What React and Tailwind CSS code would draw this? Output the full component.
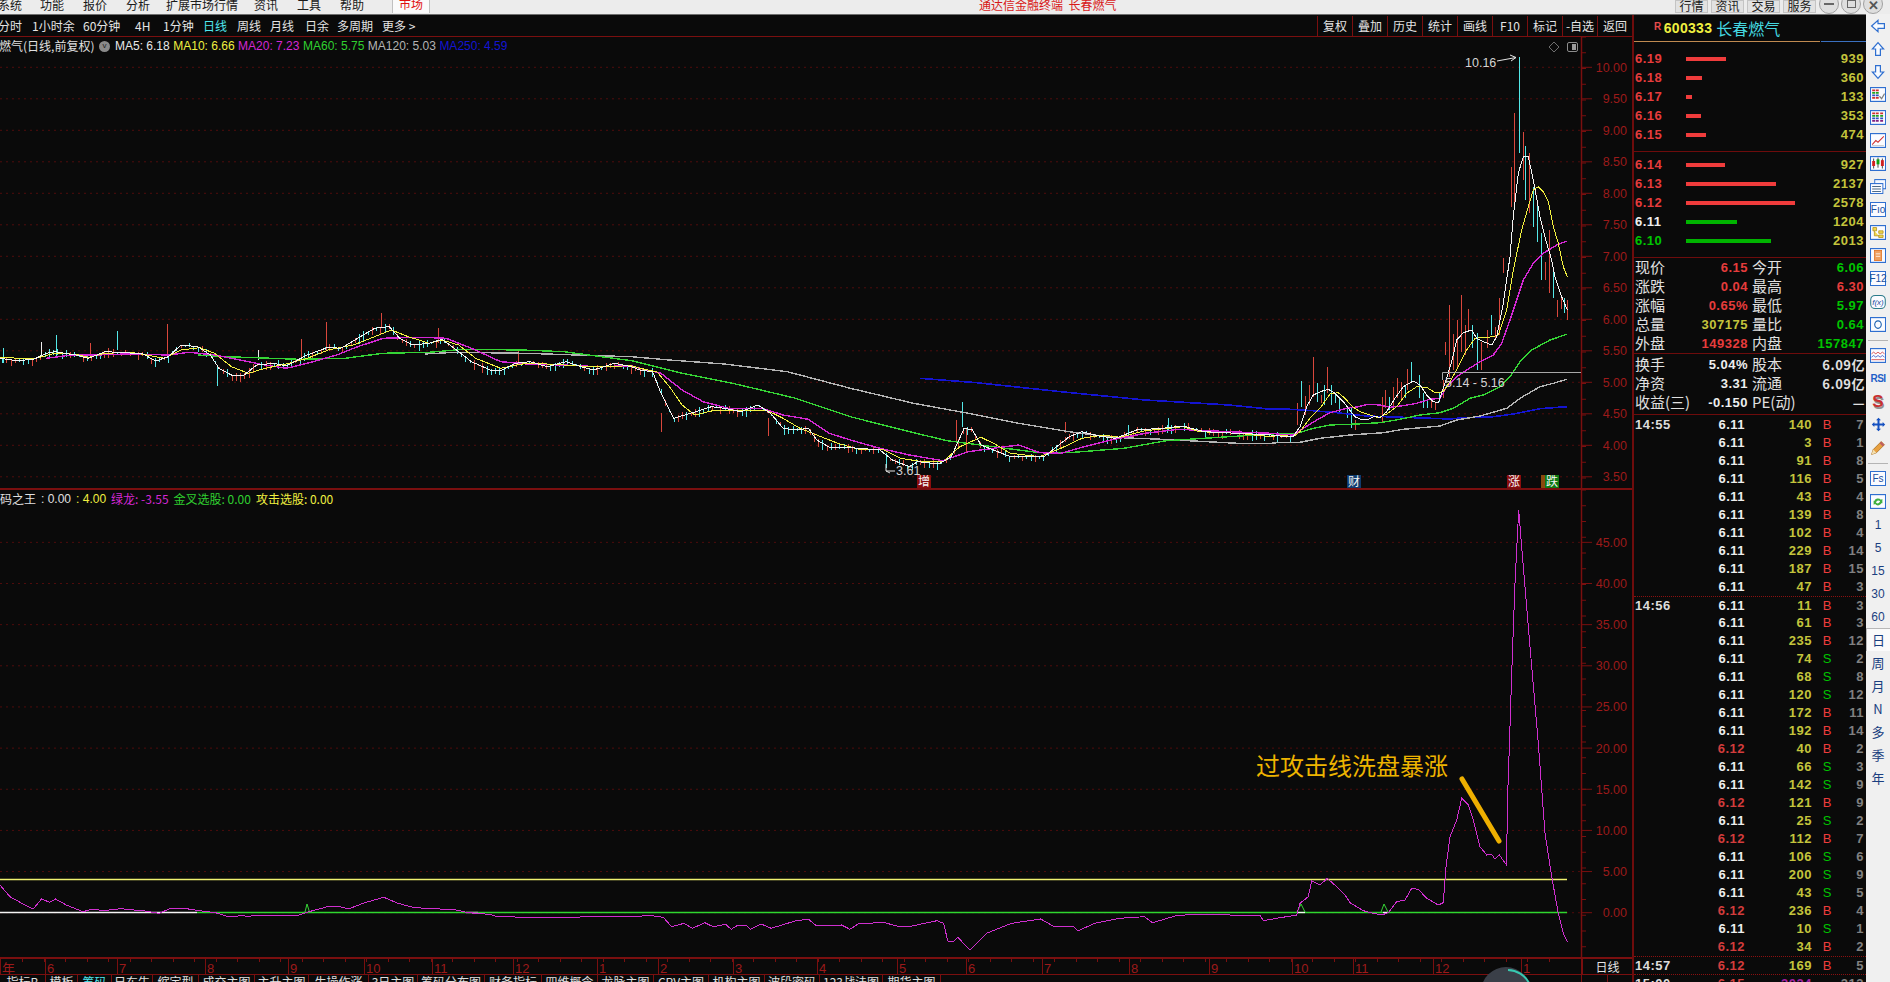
import React from 'react'

const CJK = 'font-["Noto_Sans_CJK_SC","Liberation_Sans",sans-serif]'
const NUM = 'font-["Liberation_Sans","Noto_Sans_CJK_SC",sans-serif]'

// each zoomed crop has its own scale, points below were read off those crops
const fit = (ox, oy, sx, sy) => pts => pts.map(([x, y]) => [ox + x / sx, oy + y / sy])
const left = fit(0, 300, 2.376, 3)
const mid = fit(640, 360, 2.376, 3)
const right = fit(1280, 40, 3, 3)
const join = (a, b, c) => [
  ...left(a).filter(p => p[0] < 640),
  ...mid(b).filter(p => p[0] >= 640 && p[0] < 1280),
  ...right(c),
]

const MA5 = join(
  [[0,175],[40,182],[80,178],[110,160],[130,155],[180,165],[210,175],[250,155],[300,158],[340,162],[370,183],[400,170],[430,135],[470,140],[500,165],[520,205],[550,225],[580,225],[610,195],[650,190],[680,198],[730,165],[780,142],[810,145],[850,115],[890,85],[925,80],[950,115],[980,135],[1020,130],[1050,118],[1085,150],[1120,185],[1165,210],[1190,212],[1225,190],[1260,185],[1300,200],[1345,185],[1380,200],[1410,210],[1460,190],[1500,200]],
  [[0,30],[30,35],[50,100],[80,175],[120,160],[170,140],[200,145],[240,155],[280,135],[310,160],[340,205],[370,210],[400,205],[420,240],[450,262],[490,262],[570,270],[600,300],[640,320],[660,305],[710,312],[740,290],[770,205],[790,210],[810,255],[850,275],[880,290],[960,290],[990,260],[1020,230],[1050,215],[1090,228],[1130,235],[1180,210],[1240,205],[1290,198],[1340,215],[1420,220],[1500,225]],
  [[0,1188],[40,1190],[60,1160],[80,1100],[100,1065],[130,1052],[145,1048],[165,1060],[190,1085],[205,1105],[225,1130],[245,1140],[265,1138],[285,1128],[300,1133],[320,1115],[345,1075],[370,1040],[400,1023],[420,1035],[440,1065],[460,1085],[475,1088],[495,1030],[515,965],[530,900],[550,878],[575,870],[590,895],[610,905],[635,915],[650,890],[670,790],[690,650],[700,530],[715,400],[730,350],[745,350],[760,420],[780,530],[800,610],[815,660],[825,710],[845,770],[862,810]],
)
const MA10 = join(
  [[0,172],[80,177],[130,160],[180,163],[210,172],[250,160],[310,157],[340,163],[390,175],[430,150],[475,143],[510,160],[550,200],[590,220],[630,205],[680,192],[730,175],[780,150],[840,135],[900,105],[930,90],[970,110],[1020,130],[1050,120],[1090,135],[1130,175],[1190,205],[1250,190],[1300,192],[1380,198],[1430,200],[1500,197]],
  [[0,25],[40,35],[70,80],[100,135],[130,165],[180,150],[240,152],[300,150],[340,175],[380,205],[420,225],[470,250],[520,268],[580,270],[620,295],[670,305],[720,305],[760,260],[810,232],[840,250],[880,280],[950,290],[1000,265],[1050,235],[1100,225],[1140,232],[1200,212],[1290,200],[1330,215],[1420,220],[1500,230]],
  [[0,1185],[40,1190],[60,1175],[90,1135],[120,1105],[150,1062],[175,1058],[195,1075],[215,1098],[240,1115],[270,1125],[295,1133],[320,1122],[350,1100],[380,1060],[410,1040],[440,1042],[465,1058],[490,1055],[510,1025],[535,980],[560,930],[585,895],[605,893],[640,890],[655,885],[680,810],[700,690],[725,570],[745,500],[760,450],[775,440],[790,455],[805,485],[820,560],[835,610],[850,680],[862,710]],
)
const MA20 = join(
  [[110,175],[170,165],[230,165],[300,162],[400,165],[450,157],[510,165],[570,180],[620,193],[680,205],[730,190],[800,165],[850,140],[910,115],[1000,112],[1060,115],[1120,145],[1190,185],[1260,193],[1340,195],[1420,200],[1500,197]],
  [[0,25],[50,40],[100,90],[150,125],[210,145],[290,145],[340,165],[400,178],[450,220],[500,240],[570,265],[640,285],[720,302],[780,275],[850,263],[900,255],[950,278],[1000,280],[1050,262],[1120,240],[1200,220],[1280,208],[1400,215],[1500,220]],
  [[0,1183],[40,1185],[70,1165],[110,1140],[150,1118],[200,1105],[235,1100],[265,1093],[300,1095],[330,1102],[370,1097],[410,1090],[450,1078],[480,1075],[500,1040],[530,1010],[560,990],[600,965],[640,945],[665,910],[690,840],[710,780],[730,720],[760,670],[790,640],[830,615],[860,603]],
)
const MA60 = join(
  [[470,165],[540,170],[710,178],[820,175],[910,160],[1020,157],[1100,148],[1240,150],[1340,155],[1500,182]],
  [[0,8],[100,40],[220,70],[370,115],[500,170],[640,215],[730,242],[850,262],[950,278],[1020,278],[1150,265],[1250,242],[1340,235],[1500,222]],
  [[0,1180],[50,1180],[100,1165],[150,1155],[230,1152],[300,1148],[360,1138],[420,1125],[480,1118],[520,1105],[570,1075],[610,1065],[660,1040],[690,1010],[720,965],[755,930],[810,900],[860,883]],
)
const MA120 = join(
  [[1010,162],[1080,157],[1250,160],[1370,165],[1500,170]],
  [[70,0],[200,12],[350,35],[500,85],[650,130],[780,160],[900,190],[1020,215],[1120,232],[1240,238],[1420,250],[1500,250]],
  [[0,1207],[60,1207],[120,1195],[210,1185],[310,1178],[370,1168],[480,1158],[530,1140],[600,1128],[680,1105],[720,1075],[780,1040],[820,1030],[860,1018]],
)
const MA250 = join(
  [],
  [[665,55],[800,68],[1000,95],[1200,120],[1400,135],[1500,148]],
  [[0,1106],[100,1112],[170,1118],[260,1128],[400,1133],[510,1137],[550,1133],[640,1130],[700,1122],[780,1106],[860,1100]],
)

const R = '#d9473c'
const C = '#54e8e8'

const handCandles = [
  ...[[52,1090,1155,R],[64,1022,1100,C],[76,1068,1125,R],[86,1035,1095,R],[98,952,1070,R],[110,1030,1085,C],[122,1065,1090,R],[132,1035,1095,C],[142,982,1060,R],[154,1035,1095,C],[166,1060,1090,C],[178,1070,1115,C],[200,1105,1135,C],[212,1105,1165,C],[224,1140,1170,R],[305,1070,1145,R],[314,1050,1105,R],[326,1070,1110,C],[338,1040,1105,R],[350,1015,1075,R],[362,1025,1080,R],[374,1035,1075,C],[382,988,1050,R],[394,965,1030,C],[418,1005,1075,C],[430,1060,1105,C],[440,1080,1105,C],[452,1075,1105,R],[464,1085,1110,R],[476,1060,1085,C],[488,1020,1075,R],[496,905,945,R],[508,795,1010,R],[520,882,990,R],[532,840,985,R],[544,765,935,R],[554,855,945,R],[565,808,875,R],[576,855,925,C],[590,880,990,C],[602,905,990,R],[622,870,925,R],[634,825,885,C],[646,860,895,R],[658,775,885,R],[668,655,698,R],[692,380,500,R],[703,220,500,R],[716,50,340,C],[728,275,420,R],[736,318,480,C],[748,340,520,R],[760,440,560,C],[772,480,605,C],[784,580,720,C],[794,665,720,R],[806,570,760,R],[818,680,775,C],[830,780,830,R],[842,775,808,R],[852,775,818,C],[862,780,840,R]]
    .map(([x, a, b, c]) => [1280 + x / 3, 40 + a / 3, 40 + b / 3, c]),
  ...[[8,145,190,C],[98,125,170,'#eeeeee'],[134,105,170,C],[215,130,175,R],[279,93,150,C],[397,72,165,R],[515,195,258,C],[714,118,170,R],[775,67,150,R],[905,40,85,R],[613,150,180,'#eeeeee'],[1230,150,190,R],[1040,85,130,R]]
    .map(([x, a, b, c]) => [x / 2.376, 300 + a / 3, 300 + b / 3, c]),
  ...[[50,160,215,R],[305,175,228,R],[765,127,200,C],[750,180,250,R],[775,205,280,R],[1010,185,220,R],[1160,195,225,C],[1255,175,210,C],[1562,135,195,R],[585,280,325,C]]
    .map(([x, a, b, c]) => [640 + x / 2.376, 360 + a / 3, 360 + b / 3, c]),
]

function yAt(line, x) {
  for (let i = 1; i < line.length; i++) {
    if (x <= line[i][0]) {
      const [x0, y0] = line[i - 1]
      const [x1, y1] = line[i]
      return y0 + ((y1 - y0) * (x - x0)) / (x1 - x0 || 1)
    }
  }
  return line[line.length - 1][1]
}

// small bars that follow the white line, same seed every render
function makeCandles() {
  const out = []
  let seed = 7
  const rnd = () => {
    seed = (seed * 9301 + 49297) % 233280
    return seed / 233280
  }
  for (let x = 2; x < 1290; x += 4.25) {
    const base = yAt(MA5, x)
    const up = rnd() * 4
    const down = 1 + rnd() * 6
    const col = rnd() > 0.5 ? R : C
    out.push([x, base - up, base + down, col])
  }
  return out
}

const CANDLES = [...makeCandles(), ...handCandles]
const pathFor = col =>
  CANDLES.filter(c => c[3] === col)
    .map(c => `M${Math.round(c[0]) + 0.5} ${c[1].toFixed(1)}V${c[2].toFixed(1)}`)
    .join('')

const OSC = [
  ...fit(0, 860, 1.206, 3)([[0,75],[12,110],[30,135],[40,147],[50,117],[60,127],[67,117],[80,135],[100,155],[112,147],[125,152],[145,146],[175,153],[192,160],[205,146],[225,146],[240,152],[260,158],[275,170],[285,170],[290,166],[300,170],[305,166],[360,166],[370,157],[395,140],[410,140],[420,147],[440,128],[463,112],[480,130],[500,143],[530,147],[550,150],[565,158],[590,163],[600,170],[640,172],[700,171],[770,170],[780,165],[800,172],[810,200],[825,190],[835,205],[850,188],[860,200],[875,193],[882,208],[890,195],[900,195],[905,208],[918,192],[930,205],[960,182],[975,178],[985,198],[1015,195],[1025,208],[1035,192],[1065,187],[1085,200],[1100,198],[1130,182],[1138,190],[1143,243],[1150,245],[1155,232],[1170,270],[1190,220],[1220,190],[1255,177],[1270,198],[1295,200],[1300,213],[1320,190],[1350,175],[1380,170],[1390,188],[1420,166],[1450,163]]),
  ...fit(1230, 500, 3, 3)([[0,1245],[90,1245],[100,1262],[140,1255],[200,1245],[210,1210],[235,1190],[245,1142],[270,1155],[292,1135],[320,1160],[345,1185],[360,1208],[400,1232],[430,1240],[455,1245],[475,1238],[500,1205],[525,1200],[545,1165],[565,1168],[590,1195],[625,1215],[640,1208],[648,1100],[660,1010],[680,960],[695,895],[715,915],[730,960],[750,1040],[770,1065],[785,1063],[795,1078],[808,1065],[830,1095],[832,920],[840,680],[845,520],[855,250],[866,30],[880,200],[900,440],[925,730],[945,1000],[965,1130],[985,1240],[1000,1300],[1012,1325]]),
]

const poly = pts => pts.map(p => `${p[0].toFixed(1)},${p[1].toFixed(1)}`).join(' ')

const AXIS_RED = '#9c1a1a'
const LINE_RED = '#7a0f0f'
const GRID_RED = '#4f0c0c'

const priceY = v => 67.3 + (10 - v) * 63
const oscY = v => 912.7 - v * 8.23
const PRICES = [10, 9.5, 9, 8.5, 8, 7.5, 7, 6.5, 6, 5.5, 5, 4.5, 4, 3.5]
const OSC_VALS = [45, 40, 35, 30, 25, 20, 15, 10, 5, 0]

const svgFont = { fontFamily: '"Liberation Sans","Noto Sans CJK SC",sans-serif' }

function Axis({ values, toY, top, bottom }) {
  const ticks = []
  for (let y = top; y < bottom; y += 15.75) ticks.push(y)
  return (
    <g style={svgFont}>
      {values.map(v => (
        <g key={v}>
          <line x1="0" x2="1581" y1={toY(v)} y2={toY(v)} stroke={GRID_RED} strokeDasharray="2 4" />
          <line x1="1581" x2="1592" y1={toY(v)} y2={toY(v)} stroke={LINE_RED} />
          <text x="1627" y={toY(v) + 4.5} textAnchor="end" fontSize="12.5" fill={AXIS_RED}>
            {v.toFixed(2)}
          </text>
        </g>
      ))}
      {ticks.map(y => (
        <line key={y} x1="1581" x2="1586" y1={y} y2={y} stroke={LINE_RED} />
      ))}
      <line x1="1581.5" x2="1581.5" y1={top} y2={bottom} stroke={LINE_RED} strokeWidth="1.5" />
    </g>
  )
}

function Badge({ x, w = 14, fill, children, y = 475 }) {
  return (
    <g>
      <rect x={x} y={y} width={w} height={13} fill={fill} />
      <text x={x + w / 2} y={y + 11} textAnchor="middle" fontSize="12" fill="#f4f4f4">{children}</text>
    </g>
  )
}

function MaLine({ pts, color, width = 1 }) {
  return <polyline points={poly(pts)} fill="none" stroke={color} strokeWidth={width} shapeRendering="crispEdges" />
}

function PriceChart() {
  return (
    <svg viewBox="0 37 1632 451" width="1632" height="451" className="block">
      <Axis values={PRICES} toY={priceY} top={37} bottom={488} />
      <path d={pathFor(R)} stroke={R} fill="none" shapeRendering="crispEdges" />
      <path d={pathFor(C)} stroke={C} fill="none" shapeRendering="crispEdges" />
      <path d={pathFor('#eeeeee')} stroke="#eeeeee" fill="none" shapeRendering="crispEdges" />
      <MaLine pts={MA250} color="#1414d2" width={1.6} />
      <MaLine pts={MA120} color="#b4b4b4" width={1.4} />
      <MaLine pts={MA60} color="#35d435" width={1.4} />
      <MaLine pts={MA20} color="#d428d4" width={1.4} />
      <MaLine pts={MA10} color="#f2f240" />
      <MaLine pts={MA5} color="#f4f4f4" />

      {/* 5.14 - 5.16 range marker */}
      <path d="M1442.5 380V372.5H1581" stroke="#a8a8a8" fill="none" />
      <g style={svgFont} fill="#d4d4d4" fontSize="12.5">
        <text x="1445" y="387">5.14 - 5.16</text>
        <text x="1465" y="67">10.16</text>
        <text x="896" y="475">3.61</text>
      </g>
      <path d="M1497 61L1516 57.5M1510 55L1516 57.5L1511 61" stroke="#e4e4e4" fill="none" />
      <path d="M895 471H886V464M886 471L890 473" stroke="#e4e4e4" fill="none" />

      <g style={{ fontFamily: '"Noto Sans CJK SC",sans-serif' }}>
        <Badge x={917} fill="#8a0d0d">增</Badge>
        <Badge x={1347} fill="#0f3b6e">财</Badge>
        <Badge x={1507} fill="#8a0d0d">涨</Badge>
        <Badge x={1541} w={8} fill="#8a4a0d">
          {''}
        </Badge>
        <Badge x={1545} fill="#0d7a12">跌</Badge>
      </g>

      {/* diamond and pane toggle */}
      <path d="M1554 42L1559 47L1554 52L1549 47Z" stroke="#6e6e6e" fill="none" />
      <rect x="1567.5" y="42.5" width="10" height="9" rx="1.5" stroke="#8c8c8c" fill="none" />
      <rect x="1572" y="44" width="4" height="6" fill="#9a9a9a" />
    </svg>
  )
}

function OscChart() {
  return (
    <svg viewBox="0 490 1632 467" width="1632" height="467" className="block">
      <Axis values={OSC_VALS} toY={oscY} top={490} bottom={957} />
      <line x1="0" x2="1567" y1="879.5" y2="879.5" stroke="#f0f070" strokeWidth="1.3" />
      <line x1="197" x2="1567" y1="912.5" y2="912.5" stroke="#2fd62f" strokeWidth="1.3" />
      <line x1="0" x2="197" y1="912.5" y2="912.5" stroke="#f4f4f4" strokeWidth="1.3" />
      <line x1="466" x2="478" y1="912.5" y2="912.5" stroke="#9a9a9a" strokeWidth="1.6" />
      <line x1="1297" x2="1305" y1="912.5" y2="912.5" stroke="#f4f4f4" strokeWidth="1.3" />
      <line x1="1383" x2="1388" y1="912.5" y2="912.5" stroke="#f4f4f4" strokeWidth="1.3" />
      <path d="M305 912L307 904L309.5 912M1297 912L1301 904L1305 912M1381 912L1384 904L1388 912" stroke="#36d436" fill="none" />
      <polyline points={poly(OSC)} fill="none" stroke="#cf2fcf" strokeWidth="1" shapeRendering="crispEdges" />
      <line x1="1462" y1="779" x2="1499" y2="841" stroke="#eeb000" strokeWidth="5" strokeLinecap="round" />
      <text
        x="1256"
        y="775"
        fontSize="24"
        fill="#eeb400"
        style={{ fontFamily: '"Noto Sans CJK SC",sans-serif' }}
      >
        过攻击线洗盘暴涨
      </text>
    </svg>
  )
}

const MONTHS = [
  [0, '年'], [45, '6'], [117, '7'], [205, '8'], [288, '9'], [364, '10'], [432, '11'], [513, '12'], [597, '1'],
  [658, '2'], [733, '3'], [817, '4'], [897, '5'], [966, '6'], [1042, '7'], [1129, '8'], [1209, '9'], [1292, '10'],
  [1353, '11'], [1433, '12'], [1521, '1'],
]

function DateAxis() {
  const minor = []
  for (let x = 22; x < 1570; x += 21.5) minor.push(x)
  return (
    <svg viewBox="0 959 1581 15" width="1581" height="15" className="block shrink-0">
      {minor.map(x => (
        <line key={x} x1={Math.round(x) + 0.5} x2={Math.round(x) + 0.5} y1="959" y2="962" stroke={LINE_RED} />
      ))}
      {MONTHS.map(([x, label]) => (
        <g key={x}>
          <line x1={x + 0.5} x2={x + 0.5} y1="959" y2="974" stroke={LINE_RED} />
          <text x={x + 2} y="972.5" fontSize="13" fill={AXIS_RED} style={svgFont}>{label}</text>
        </g>
      ))}
    </svg>
  )
}

const TOP_MENU = [
  ['系统', 'w-[42px] -ml-[2px]'],
  ['功能', 'w-[43px]'],
  ['报价', 'w-[43px]'],
  ['分析', 'w-[40px]'],
  ['扩展市场行情', 'w-[88px]'],
  ['资讯', 'w-[43px]'],
  ['工具', 'w-[43px]'],
  ['帮助', 'w-[49px]'],
]

const LEFT_TOOLS = [
  ['分时', 'w-[34px] -ml-[2px]'],
  ['1小时余', 'w-[51px]'],
  ['60分钟', 'w-[52px]'],
  ['4H', 'w-[28px]'],
  ['1分钟', 'w-[40px]'],
  ['日线', 'w-[34px] text-[#4fe8f0]'],
  ['周线', 'w-[33px]'],
  ['月线', 'w-[35px]'],
  ['日余', 'w-[32px]'],
  ['多周期', 'w-[45px]'],
  ['更多 >', 'w-[40px]'],
]

const RIGHT_TOOLS = ['复权', '叠加', '历史', '统计', '画线', 'F10', '标记', '-自选', '返回']

const LEGEND = [
  ['MA5: 6.18', 'text-[#e8e8e8]'],
  ['MA10: 6.66', 'text-[#f0f040]'],
  ['MA20: 7.23', 'text-[#d428d4]'],
  ['MA60: 5.75', 'text-[#30d030]'],
  ['MA120: 5.03', 'text-[#b4b4b4]'],
  ['MA250: 4.59', 'text-[#1414d2]'],
]

const TABS = [
  ['指标B', 'w-[46px]'], ['模板', 'w-[32px]'], ['筹码', 'w-[34px] text-[#4fe8f0]'], ['日东牛', 'w-[41px]'],
  ['缩定型', 'w-[46px]'], ['成交主图', 'w-[56px]'], ['主升主图', 'w-[54px]'], ['生操作涨', 'w-[60px]'],
  ['3日主图', 'w-[49px]'], ['筹码分布图', 'w-[67px]'], ['财务指标', 'w-[57px]'], ['四维概念', 'w-[56px]'],
  ['龙脉主图', 'w-[56px]'], ['CPV主图', 'w-[55px]'], ['机构主图', 'w-[56px]'], ['波段密码', 'w-[55px]'],
  ['123战法图', 'w-[63px]'], ['期货主图', 'w-[58px]'],
]

function TopBar() {
  return (
    <div className={`flex h-[15px] shrink-0 items-start overflow-hidden border-b border-[#6e6e6e] bg-[#ececec] text-[12px] leading-[9px] text-[#1a1a1a] ${CJK}`}>
      {TOP_MENU.map(([label, cls]) => (
        <span key={label} className={`shrink-0 ${cls}`}>{label}</span>
      ))}
      <span className="-mt-px ml-[3px] flex h-[14px] w-[38px] shrink-0 justify-center border-x border-[#c0c0c0] bg-[#fafafa] text-[#e01010]">市场</span>
      <span className="ml-[549px] w-[139px] shrink-0 text-[#d81818]">通达信金融终端&nbsp;&nbsp;长春燃气</span>
      <div className="ml-[557px] flex shrink-0 gap-[3px]">
        {['行情', '资讯', '交易', '服务'].map(label => (
          <span key={label} className="flex h-[13px] w-[33px] justify-center border border-[#c4c4c4] bg-[#e2e2e2]">{label}</span>
        ))}
      </div>
      <div className="ml-[3px] flex shrink-0 gap-[2px]">
        <span className="-mt-[6px] flex h-[20px] w-[20px] items-center justify-center rounded-full border border-[#a0a0a0] bg-[#dedede]">
          <span className="h-[2px] w-[10px] bg-[#666666]" />
        </span>
        <span className="-mt-[6px] flex h-[20px] w-[20px] items-center justify-center rounded-full border border-[#a0a0a0] bg-[#dedede]">
          <span className="h-[8px] w-[9px] border border-[#666666]" />
        </span>
        <span className="-mt-[6px] flex h-[20px] w-[20px] items-center justify-center rounded-full border border-[#a0a0a0] bg-[#dedede] text-[13px] font-bold text-[#555555]">✕</span>
      </div>
    </div>
  )
}

function Toolbar() {
  return (
    <div className={`flex h-[22px] shrink-0 items-center border-b border-[#7a0f0f] pt-[1px] text-[12px] text-[#e4e4e4] ${CJK}`}>
      {LEFT_TOOLS.map(([label, cls]) => (
        <span key={label} className={`shrink-0 ${cls}`}>{label}</span>
      ))}
      <div className="ml-auto flex h-full">
        {RIGHT_TOOLS.map(label => (
          <span key={label} className="flex h-full w-[35px] items-center justify-center border-l border-[#7a0f0f]">{label}</span>
        ))}
      </div>
    </div>
  )
}

function Legend() {
  return (
    <div className={`absolute left-0 top-0 flex items-center gap-[3.5px] text-[12px] ${NUM}`}>
      <span className={`-ml-[1px] w-[96.5px] whitespace-nowrap text-[#e0e0e0] ${CJK}`}>燃气(日线,前复权)</span>
      <span className="mr-[1.5px] flex h-[11px] w-[11px] items-center justify-center rounded-full bg-[#8a8a8a] text-[8px] leading-none text-[#222222]">v</span>
      {LEGEND.map(([label, cls]) => (
        <span key={label} className={cls}>{label}</span>
      ))}
    </div>
  )
}

function OscLegend() {
  return (
    <div className={`absolute left-0 top-0 flex items-center gap-[5px] text-[12px] ${NUM}`}>
      <span className={`text-[#e0e0e0] ${CJK}`}>码之王</span>
      <span className="text-[#e0e0e0]">: 0.00</span>
      <span className="text-[#f0f040]">: 4.00</span>
      <span className={`text-[#d428d4] ${CJK}`}>绿龙: -3.55</span>
      <span className={`text-[#30d030] ${CJK}`}>金叉选股: 0.00</span>
      <span className={`text-[#f0f040] ${CJK}`}>攻击选股: 0.00</span>
    </div>
  )
}

const RED = 'text-[#e63c3c]'
const YEL = 'text-[#c4c43c]'
const GRN = 'text-[#00c400]'
const WHT = 'text-[#eeeeee]'

const SELL = [
  ['6.19', 'w-[40px]', '939'],
  ['6.18', 'w-[16px]', '360'],
  ['6.17', 'w-[6px]', '133'],
  ['6.16', 'w-[15px]', '353'],
  ['6.15', 'w-[20px]', '474'],
]
const BUY = [
  ['6.14', 'w-[39px]', '927', RED, 'bg-[#f03c3c]'],
  ['6.13', 'w-[90px]', '2137', RED, 'bg-[#f03c3c]'],
  ['6.12', 'w-[109px]', '2578', RED, 'bg-[#f03c3c]'],
  ['6.11', 'w-[51px]', '1204', WHT, 'bg-[#00b400]'],
  ['6.10', 'w-[85px]', '2013', GRN, 'bg-[#00b400]'],
]

const STATS = [
  ['现价', '6.15', RED, '今开', '6.06', GRN],
  ['涨跌', '0.04', RED, '最高', '6.30', RED],
  ['涨幅', '0.65%', RED, '最低', '5.97', GRN],
  ['总量', '307175', YEL, '量比', '0.64', GRN],
  ['外盘', '149328', RED, '内盘', '157847', GRN],
]

const EXTRA = [
  ['换手', '5.04%', '股本', '6.09亿'],
  ['净资', '3.31', '流通', '6.09亿'],
  ['收益(三)', '-0.150', 'PE(动)', '—'],
]

const TICK_ROWS = [
  ['14:55', '6.11', '140', 'B', '7'], ['', '6.11', '3', 'B', '1'], ['', '6.11', '91', 'B', '8'], ['', '6.11', '116', 'B', '5'],
  ['', '6.11', '43', 'B', '4'], ['', '6.11', '139', 'B', '8'], ['', '6.11', '102', 'B', '4'], ['', '6.11', '229', 'B', '14'],
  ['', '6.11', '187', 'B', '15'], ['', '6.11', '47', 'B', '3'],
  ['14:56', '6.11', '11', 'B', '3'], ['', '6.11', '61', 'B', '3'], ['', '6.11', '235', 'B', '12'], ['', '6.11', '74', 'S', '2'],
  ['', '6.11', '68', 'S', '8'], ['', '6.11', '120', 'S', '12'], ['', '6.11', '172', 'B', '11'], ['', '6.11', '192', 'B', '14'],
  ['', '6.12', '40', 'B', '2'], ['', '6.11', '66', 'S', '3'], ['', '6.11', '142', 'S', '9'], ['', '6.12', '121', 'B', '9'],
  ['', '6.11', '25', 'S', '2'], ['', '6.12', '112', 'B', '7'], ['', '6.11', '106', 'S', '6'], ['', '6.11', '200', 'S', '9'],
  ['', '6.11', '43', 'S', '5'], ['', '6.12', '236', 'B', '4'], ['', '6.11', '10', 'S', '1'], ['', '6.12', '34', 'B', '2'],
  ['14:57', '6.12', '169', 'B', '5'],
]

function BookRow({ price, barW, vol, priceCls = RED, barCls = 'bg-[#f03c3c]' }) {
  return (
    <div className="flex h-[19px] items-center pr-[2px]">
      <span className={`w-[52px] pl-[1px] ${priceCls}`}>{price}</span>
      <span className={`h-[4px] ${barW} ${barCls}`} />
      <span className={`ml-auto ${YEL}`}>{vol}</span>
    </div>
  )
}

function TickRow({ row, top }) {
  const [time, price, vol, side, count] = row
  return (
    <div className={`flex h-[18px] items-center pr-[2px] ${top ? 'border-t border-dotted border-[#8a1010]' : ''}`}>
      <span className="w-[56px] pl-[1px] text-[#dcdcdc]">{time}</span>
      <span className={`w-[55px] text-right ${price === '6.12' ? 'text-[#d23c3c]' : WHT}`}>{price}</span>
      <span className={`w-[67px] text-right ${YEL}`}>{vol}</span>
      <span className={`w-[20px] text-right font-normal ${side === 'B' ? 'text-[#f03c3c]' : 'text-[#00c400]'}`}>{side}</span>
      <span className="ml-auto text-[#808080]">{count}</span>
    </div>
  )
}

function QuotePanel() {
  return (
    <aside className={`flex w-[234px] shrink-0 flex-col overflow-hidden border-l-2 border-[#6e0c0c] text-[13px] font-bold tracking-[0.5px] ${NUM}`}>
      <div className="flex h-[26px] shrink-0 items-center pl-[20px]">
        <span className="mb-[4px] mr-[2px] text-[10px] text-[#e64a4a]">R</span>
        <span className="text-[14px] tracking-[0.3px] text-[#f0f040]">600333</span>
        <span className={`ml-[4px] text-[16px] font-normal tracking-normal text-[#44d8e0] ${CJK}`}>长春燃气</span>
      </div>
      <div className="flex h-[1px] shrink-0">
        <span className="w-[186px] bg-[#c08a50]" />
        <span className="ml-[1px] flex-1 bg-[#3a70c0]" />
      </div>
      <div className="shrink-0 border-b border-[#6e0c0c] pb-[7px] pt-[7px]">
        {SELL.map(([p, w, v]) => <BookRow key={p} price={p} barW={w} vol={v} />)}
      </div>
      <div className="shrink-0 border-b border-[#6e0c0c] pb-[7px] pt-[3px]">
        {BUY.map(([p, w, v, pc, bc]) => <BookRow key={p} price={p} barW={w} vol={v} priceCls={pc} barCls={bc} />)}
      </div>
      <div className="shrink-0 border-b border-[#6e0c0c]">
        {STATS.map(([a, av, ac, b, bv, bc]) => (
          <div key={a} className="flex h-[19px] items-center pr-[2px]">
            <span className={`w-[32px] pl-[1px] text-[15px] font-normal tracking-normal text-[#e0e0e0] ${CJK}`}>{a}</span>
            <span className={`w-[82px] text-right ${ac}`}>{av}</span>
            <span className={`ml-[4px] w-[32px] text-[15px] font-normal tracking-normal text-[#e0e0e0] ${CJK}`}>{b}</span>
            <span className={`ml-auto ${bc}`}>{bv}</span>
          </div>
        ))}
      </div>
      <div className="shrink-0 border-b border-[#6e0c0c] pb-[2px] pt-[1px]">
        {EXTRA.map(([a, av, b, bv]) => (
          <div key={a} className="flex h-[19px] items-center">
            <span className={`w-[48px] shrink-0 whitespace-nowrap pl-[1px] text-[15px] font-normal tracking-normal text-[#e0e0e0] ${CJK}`}>{a}</span>
            <span className={`w-[66px] shrink-0 text-right ${WHT}`}>{av}</span>
            <span className={`ml-[4px] w-[42px] shrink-0 whitespace-nowrap text-[15px] font-normal tracking-normal text-[#e0e0e0] ${CJK}`}>{b}</span>
            <span className={`ml-auto pr-px text-[#e0e0e0] ${CJK} text-[13px] font-bold`}>{bv}</span>
          </div>
        ))}
      </div>
      <div className="pt-[1px]">
        {TICK_ROWS.map((row, i) => <TickRow key={i} row={row} top={i === 10 || i === 30} />)}
        <div className="flex h-[18px] items-center border-t border-dotted border-[#8a1010] pr-[2px]">
          <span className="w-[56px] pl-[1px] text-[#dcdcdc]">15:00</span>
          <span className="w-[55px] text-right text-[#d23c3c]">6.15</span>
          <span className="w-[67px] text-right text-[#a020a0]">3024</span>
          <span className="ml-auto text-[#808080]">213</span>
        </div>
      </div>
    </aside>
  )
}

const BLUE = '#2f6fd0'

const Arrow = ({ d }) => (
  <svg width="16" height="16" viewBox="0 0 20 20"><path d={d} fill="#f8fbff" stroke={BLUE} strokeWidth="1.5" /></svg>
)

const Box = ({ children }) => (
  <svg width="16" height="15" viewBox="0 0 22 18" preserveAspectRatio="none">
    <rect x="0.7" y="0.7" width="20.6" height="16.6" fill="#fbfbff" stroke={BLUE} strokeWidth="1.4" />
    {children}
  </svg>
)

const TextBox = ({ children }) => (
  <span className="flex h-[15px] w-[16px] items-center justify-center border border-[#2f6fd0] bg-[#fbfbff] font-['Liberation_Sans',sans-serif] text-[10px] text-[#1a4fa0]">
    {children}
  </span>
)

const Rows = ({ cols, colors }) =>
  colors.map((c, i) => (
    <path key={i} d={cols.map(x => `M${x} ${4 + i * 3}h4`).join('')} stroke={c} strokeWidth="2" />
  ))

const SIDE_TOP = [
  <Arrow d="M2 10L10 3V7H18V13H10V17Z" />,
  <Arrow d="M10 2L17 10H13V18H7V10H3Z" />,
  <Arrow d="M10 18L17 10H13V2H7V10H3Z" />,
  <Box>
    <Rows cols={[3, 8]} colors={['#d03030', '#20a020', '#3050c0', '#d03030']} />
    <path d="M13 11l3 3 4-6" stroke="#808080" strokeWidth="1.6" fill="none" />
  </Box>,
  <Box><Rows cols={[3, 8, 14]} colors={['#d03030', '#20a020', '#3050c0', '#802080']} /></Box>,
  <Box><path d="M3 14L8 9L11 11L19 4" stroke="#d03030" strokeWidth="1.4" fill="none" /><path d="M3 15H19" stroke="#c0c0c0" /></Box>,
  <Box>
    <path d="M5 3V15M11 2V14M17 3V15" stroke="#404040" strokeWidth="1.2" />
    <rect x="3" y="6" width="4" height="6" fill="#d02020" />
    <rect x="9" y="4" width="4" height="6" fill="#10a010" />
    <rect x="15" y="5" width="4" height="7" fill="#d02020" />
  </Box>,
  <svg width="16" height="15" viewBox="0 0 22 18" preserveAspectRatio="none">
    <rect x="6.5" y="0.7" width="15" height="11" fill="#f4f8ff" stroke={BLUE} strokeWidth="1.3" />
    <rect x="0.7" y="5.5" width="17" height="12" fill="#fbfbff" stroke={BLUE} strokeWidth="1.3" />
    <path d="M3 9h12M3 12h12M3 15h12" stroke="#406080" strokeWidth="1.2" />
  </svg>,
  <TextBox>Fıo</TextBox>,
  <Box><path d="M4 3h5v4H4zM12 7h6v3h-6zM12 12h6v3h-6zM6 7v6h6" fill="#f2d84a" stroke="#b09020" /></Box>,
  <Box><rect x="6" y="3" width="10" height="12" fill="#f0a060" stroke="#e07020" /><path d="M8 7h6M8 10h6" stroke="#fff" /></Box>,
  <TextBox>F12</TextBox>,
  <svg width="16" height="16" viewBox="0 0 22 20">
    <rect x="1" y="1" width="20" height="18" rx="6" fill="#fbfbff" stroke="#2a7a8a" strokeWidth="1.4" />
    <text x="11" y="14" textAnchor="middle" fontSize="11" fontStyle="italic" fill="#1a4fa0" style={svgFont}>f(x)</text>
  </svg>,
  <Box><circle cx="11" cy="9" r="4.5" fill="none" stroke="#1a5fb0" strokeWidth="1.5" /></Box>,
]

const SIDE_MID = [
  <Box><path d="M2 7l3-2 3 2 3-2 3 2 3-2 3 2" stroke="#d03030" fill="none" /><path d="M2 11l3-2 3 2 3-2 3 2 3-2 3 2" stroke="#3050c0" fill="none" /><path d="M2 14h18" stroke="#d03030" /></Box>,
  <span className="font-['Liberation_Sans',sans-serif] text-[10px] font-bold tracking-[-0.5px] text-[#1f5fc8]">RSI</span>,
  <span className="font-['Liberation_Sans',sans-serif] text-[17px] font-bold leading-none text-[#c83030] [text-shadow:1px_2px_0_#909090]">S</span>,
  <svg width="15" height="15" viewBox="0 0 18 18"><path d="M9 1L12 4H10.2V7.8H14V6L17 9L14 12V10.2H10.2V14H12L9 17L6 14H7.8V10.2H4V12L1 9L4 6V7.8H7.8V4H6Z" fill="#1450c0" /></svg>,
  <svg width="16" height="16" viewBox="0 0 20 20"><path d="M2 18L4 12L14 2L18 6L8 16Z" fill="#e8a040" stroke="#a87020" /><path d="M2 18L4 12L8 16Z" fill="#f4e0b0" /><path d="M14 2L18 6L16 8L12 4Z" fill="#c06060" /></svg>,
]

const SIDE_LOW = ['1', '5', '15', '30', '60', '日', '周', '月', 'N', '多', '季', '年']

function SideSlot({ children }) {
  return <div className="flex h-[23px] w-full shrink-0 items-center justify-center">{children}</div>
}

const SideRule = () => (
  <div className="flex h-[8px] shrink-0 items-center px-[2px]"><span className="h-px w-full bg-[#b4b4b4]" /></div>
)

function SideBar() {
  return (
    <nav className={`-mt-px flex w-[24px] shrink-0 flex-col bg-[#f0f0f0] text-[13px] text-[#1a3f80] ${CJK}`}>
      {SIDE_TOP.map((icon, i) => <SideSlot key={i}>{icon}</SideSlot>)}
      <SideRule />
      {SIDE_MID.map((icon, i) => <SideSlot key={i}>{icon}</SideSlot>)}
      <SideRule />
      <SideSlot><TextBox>Fs</TextBox></SideSlot>
      <SideSlot>
        <Box>
          <path d="M6 9a5 4 0 0 1 9-2l2-1v5h-5l2-2a3 3 0 0 0-5 0zM16 10a5 4 0 0 1-9 2l-2 1V8h5l-2 2a3 3 0 0 0 5 0z" fill="#40b040" />
        </Box>
      </SideSlot>
      {SIDE_LOW.map(label => (
        <div
          key={label}
          className={`flex h-[23px] shrink-0 items-center justify-center ${label === '日' ? 'border-l border-t border-[#b8b8b8] bg-[#fafafa]' : ''} ${/\d/.test(label) ? 'font-["Liberation_Sans",sans-serif] text-[12px]' : ''}`}
        >
          {label}
        </div>
      ))}
    </nav>
  )
}

export default function App() {
  return (
    <div className="flex h-[982px] w-[1890px] flex-col overflow-hidden bg-[#0a0a0a]">
      <TopBar />
      <div className="flex min-h-0 flex-1">
        <main className="relative flex w-[1632px] shrink-0 flex-col overflow-hidden">
          <Toolbar />
          <section className="relative shrink-0 border-b-2 border-[#7a0f0f]">
            <PriceChart />
            <Legend />
          </section>
          <section className="relative shrink-0 border-b-2 border-[#7a0f0f]">
            <OscChart />
            <OscLegend />
          </section>
          <div className="flex h-[16px] shrink-0 border-b border-[#7a0f0f]">
            <DateAxis />
            <div className={`flex flex-1 items-center justify-center border-l-2 border-[#7a0f0f] text-[12px] text-[#e4e4e4] ${CJK}`}>日线</div>
          </div>
          <div className={`flex min-h-0 flex-1 overflow-hidden text-[12px] leading-[14px] text-[#e0e0e0] ${CJK}`}>
            {TABS.map(([label, cls]) => (
              <span key={label} className={`shrink-0 whitespace-nowrap border-r border-[#7a0f0f] text-center ${cls}`}>{label}</span>
            ))}
            <span className="ml-auto w-[26px] shrink-0 border-l border-[#7a0f0f]" />
            <span className="w-[25px] shrink-0 border-l border-[#7a0f0f]" />
          </div>
          {/* the floating circular widget that sits over the bottom edge */}
          <div className="absolute left-[1481px] top-[952px] h-[50px] w-[50px] rounded-full bg-[#3a3f48]">
            <svg width="50" height="50" viewBox="0 0 50 50" className="block">
              <path d="M27 3A24 24 0 0 1 48 16" stroke="#38c8b0" strokeWidth="2" fill="none" />
            </svg>
          </div>
        </main>
        <QuotePanel />
        <SideBar />
      </div>
    </div>
  )
}
